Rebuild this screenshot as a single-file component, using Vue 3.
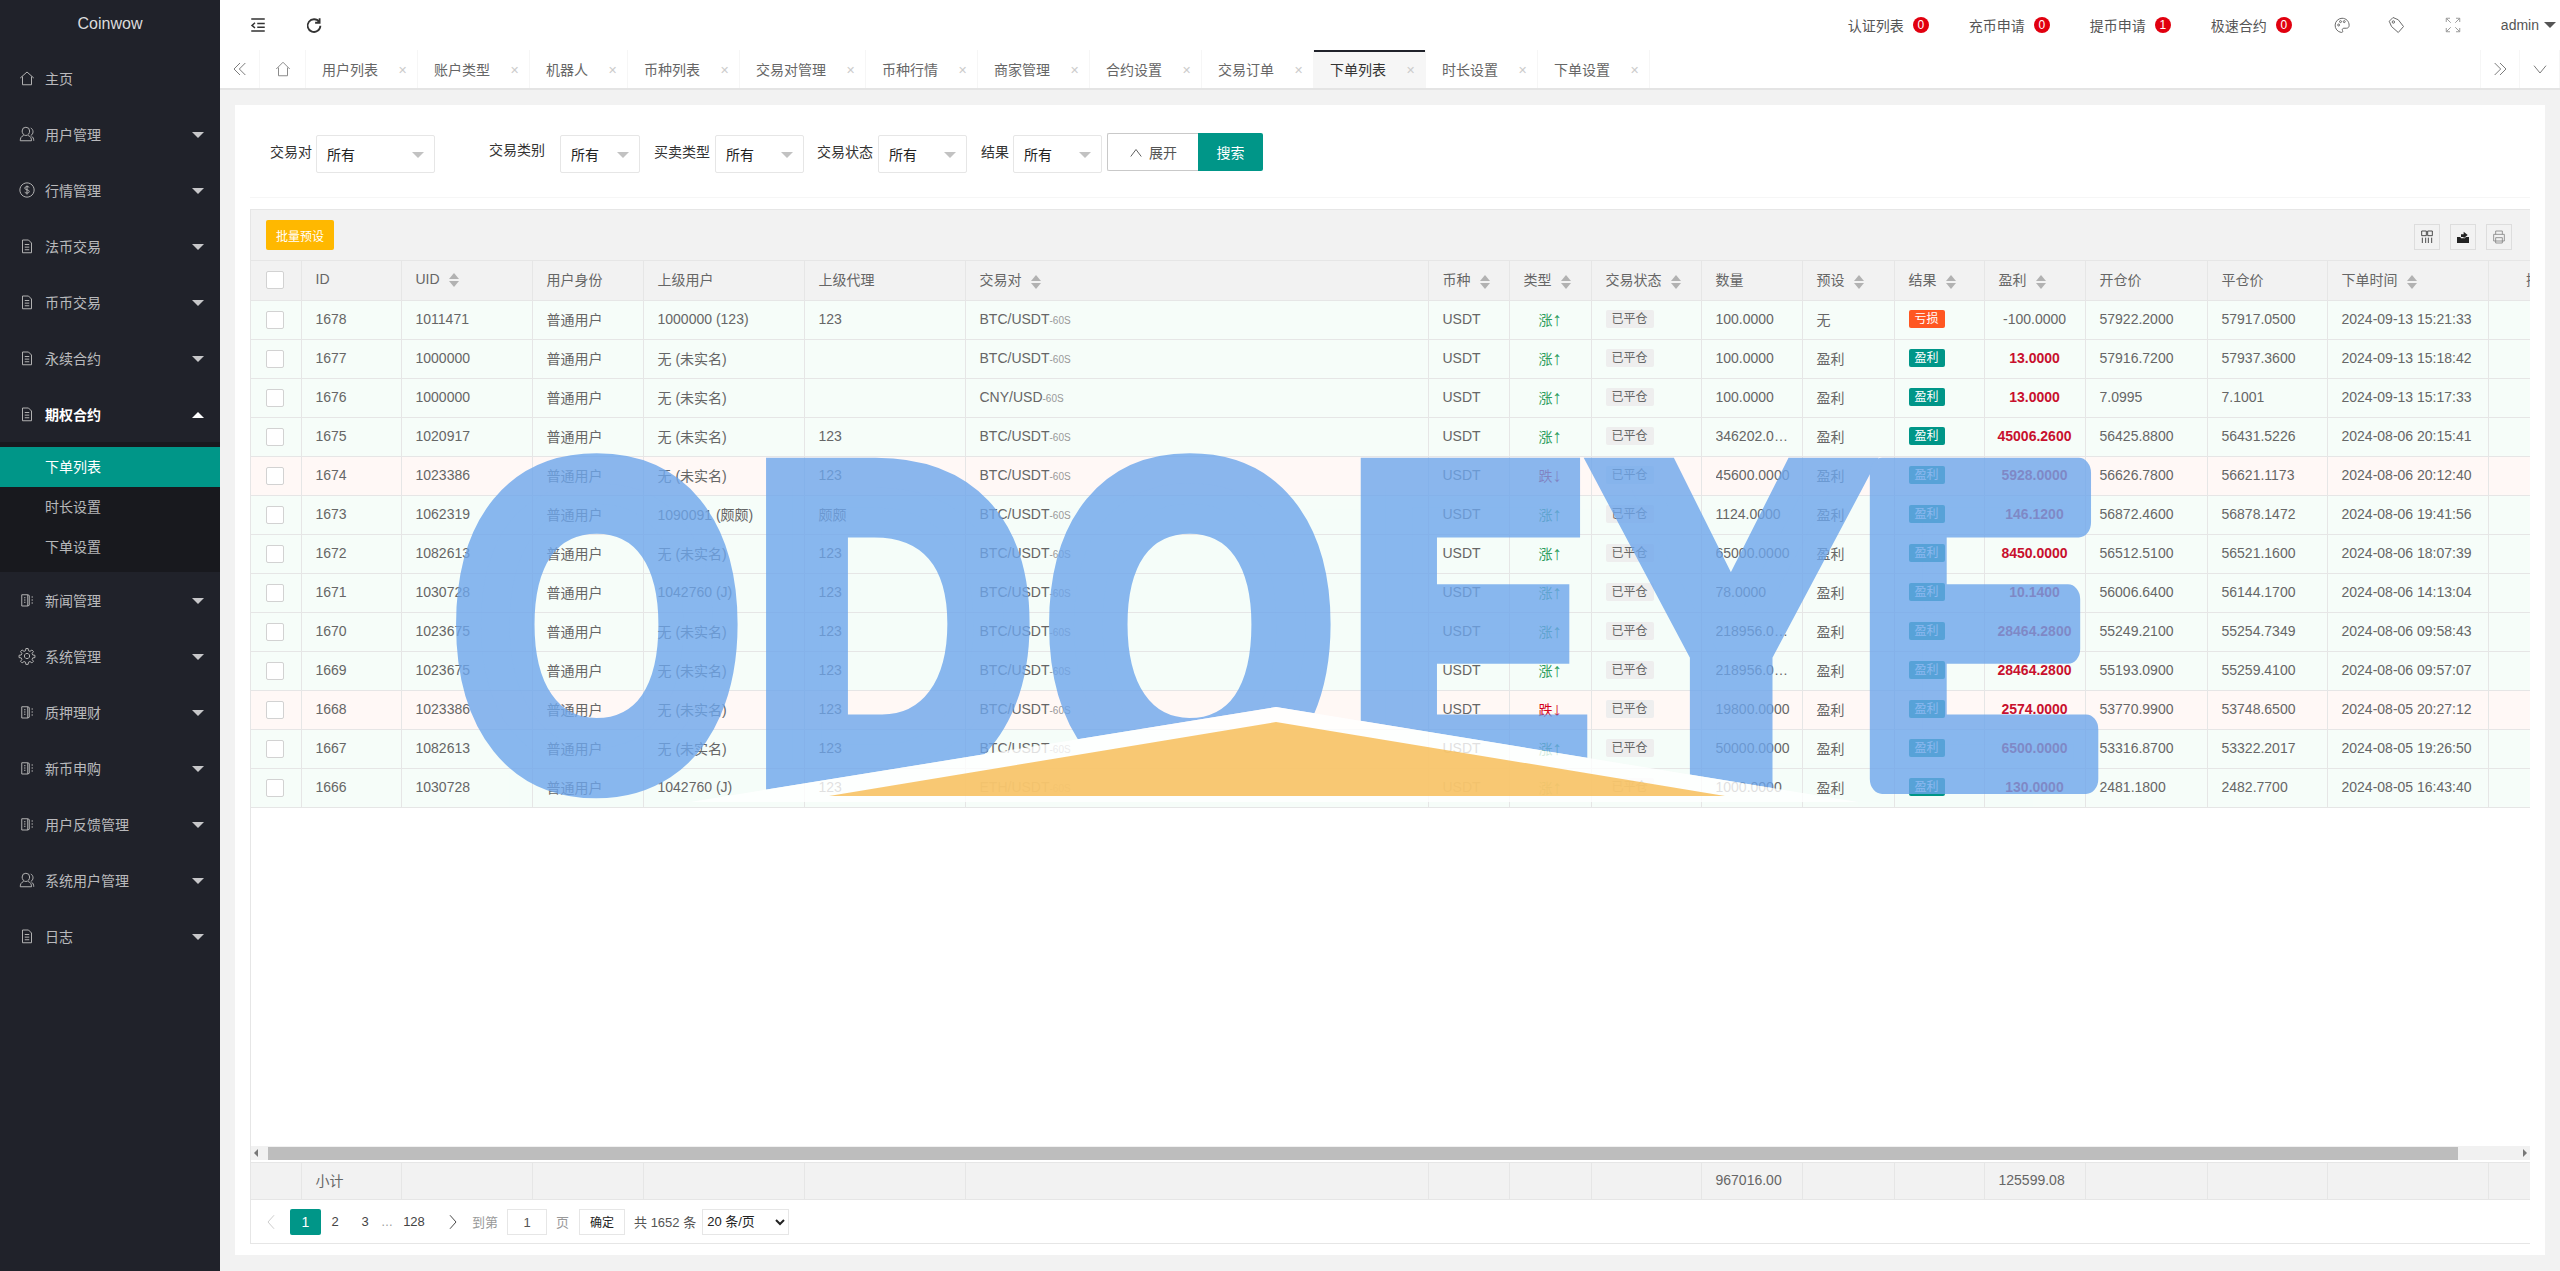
<template>
  <div class="app">
    <aside class="side">
      <div class="logo">Coinwow</div>
      <template v-for="m in menus" :key="m.name">
        <div class="menu" :class="{ open: m.subs }">
          <svg class="m-icon" viewBox="0 0 24 24"><path :d="icons[m.icon]" /></svg>
          <span class="m-name">{{ m.name }}</span>
          <i v-if="m.icon !== 'home'" class="m-arrow"></i>
        </div>
        <div v-if="m.subs" class="subs">
          <div v-for="(s, i) in m.subs" :key="s" class="sub" :class="{ on: i === 0 }">{{ s }}</div>
        </div>
      </template>
    </aside>

    <div class="main">
      <header class="top">
        <svg class="t-btn" viewBox="0 0 24 24"><path d="M3 4h18M11 10h10M11 15h10M3 20h18M8 9l-4 3.500 4 3.500" /></svg>
        <svg class="t-btn refresh" viewBox="0 0 24 24"><path d="M19 8a8.500 8.500 0 1 0 1.500 5M19.500 3v6h-6" /></svg>
        <div class="t-right">
          <div v-for="n in notices" :key="n.name" class="notice">
            <span>{{ n.name }}</span><b class="badge">{{ n.count }}</b>
          </div>
          <svg class="t-icon palette" viewBox="0 0 24 24"><path d="M12 3a9.500 9.500 0 0 0-1 18.900c2 .2 2.500-1.400 1.700-2.600-.9-1.400 0-3 1.800-3H18c2 0 3.500-1.500 3.500-3.800C21.500 7 17.500 3 12 3z" /><circle cx="7.500" cy="12" r="1.300" /><circle cx="10" cy="7.500" r="1.300" /><circle cx="15" cy="7.500" r="1.300" /></svg>
          <svg class="t-icon t-tag" viewBox="0 0 24 24"><path d="M3 7l5-5 7 3 7 9-7 8-9-8z" /><circle cx="8.500" cy="8" r="1.600" /></svg>
          <svg class="t-icon full" viewBox="0 0 24 24"><path d="M3 3l6 6M21 3l-6 6M3 21l6-6M21 21l-6-6M3 8V3h5M16 3h5v5M3 16v5h5M21 16v5h-5" /></svg>
          <span class="admin">admin</span><i class="admin-caret"></i>
        </div>
      </header>

      <nav class="tabs">
        <div class="tab-nav"><svg viewBox="0 0 24 24"><path d="M12 3L3 12l9 9M20 3l-9 9 9 9" /></svg></div>
        <div class="tab-home"><svg viewBox="0 0 24 24"><path d="M3 12l9-9 9 9M6 10v11h12V10" /></svg></div>
        <div v-for="t in tabs" :key="t" class="tab" :class="{ active: t === '下单列表' }">
          {{ t }}<span class="x">✕</span>
        </div>
        <div class="tab-fill"></div>
        <div class="tab-nav"><svg viewBox="0 0 24 24"><path d="M4 3l9 9-9 9M12 3l9 9-9 9" /></svg></div>
        <div class="tab-nav"><svg viewBox="0 0 24 24"><path d="M3 7l9 11 9-11" /></svg></div>
      </nav>

      <main class="content">
        <section class="card">
          <div class="filters">
            <div v-for="f in filters" :key="f" class="f-item">
              <label>{{ f }}</label>
              <div class="sel">所有<i></i></div>
            </div>
            <div class="btns">
              <button class="b-open"><svg viewBox="0 0 24 24"><path d="M3 18L12 6l9 12" /></svg>展开</button>
              <button class="b-search">搜索</button>
            </div>
          </div>

          <div class="grid">
            <div class="toolbar">
              <button class="b-batch">批量预设</button>
              <div class="tools">
                <div class="tool"><svg viewBox="0 0 24 24"><path d="M4 3h7v7H4zM13 3h7v7h-7zM5 13v8M10 13v8M14 13v8M19 13v8" /></svg></div>
                <div class="tool"><svg viewBox="0 0 24 24"><path class="solid" d="M3 12h5l1 2h6l1-2h5v9H3zM9 12V8h4V4l6 5-6 5v-2z" /></svg></div>
                <div class="tool dim"><svg viewBox="0 0 24 24"><path d="M7 8V3h10v5M4 8h16v10H4zM7 13h10v8H7z" /></svg></div>
              </div>
            </div>

            <div class="t-wrap">
              <table>
                <colgroup><col v-for="w in widths" :key="w.k" :style="{ width: w.w + 'px' }" /></colgroup>
                <thead>
                  <tr>
                    <th class="c-check"><i class="check"></i></th>
                    <th v-for="c in cols" :key="c.t" :class="{ last: c.t === '操作' }">
                      {{ c.t }}<span v-if="c.s" class="sort"><i></i><i></i></span>
                    </th>
                  </tr>
                </thead>
                <tbody>
                  <tr v-for="r in rows" :key="r.id" :class="r.dir === '跌' ? 'down' : 'up'">
                    <td class="c-check"><i class="check"></i></td>
                    <td>{{ r.id }}</td>
                    <td>{{ r.uid }}</td>
                    <td>普通用户</td>
                    <td>{{ r.parent }}</td>
                    <td>{{ r.agent }}</td>
                    <td>{{ r.pair }}<small>-60S</small></td>
                    <td>USDT</td>
                    <td class="dir">{{ r.dir }}<span class="dir-arrow">{{ r.dir === '跌' ? '↓' : '↑' }}</span></td>
                    <td><span class="tag-grey">已平仓</span></td>
                    <td><div class="clip">{{ r.qty }}</div></td>
                    <td>{{ r.preset }}</td>
                    <td><span class="tag" :class="{ loss: r.preset === '无' }">{{ r.preset === '无' ? '亏损' : '盈利' }}</span></td>
                    <td class="profit" :class="{ neg: r.preset === '无' }">{{ r.profit }}</td>
                    <td>{{ r.open }}</td>
                    <td>{{ r.close }}</td>
                    <td>{{ r.time }}</td>
                    <td></td>
                  </tr>
                </tbody>
              </table>
            </div>

            <div class="hbar"><i class="arr l"></i><div class="thumb"></div><i class="arr r"></i></div>

            <div class="total">
              <table>
                <colgroup><col v-for="w in widths" :key="w.k" :style="{ width: w.w + 'px' }" /></colgroup>
                <tbody>
                  <tr>
                    <td v-for="(c, i) in totalCells" :key="i">{{ c }}</td>
                  </tr>
                </tbody>
              </table>
            </div>

            <div class="pager">
              <svg class="p-arrow dim" viewBox="0 0 12 24"><path d="M10 3L2 12l8 9" /></svg>
              <span class="p-on">1</span>
              <span class="p-num n2">2</span>
              <span class="p-num n3">3</span>
              <span class="p-dots">…</span>
              <span class="p-num n4">128</span>
              <svg class="p-arrow" viewBox="0 0 12 24"><path d="M2 3l8 9-8 9" /></svg>
              <span class="p-text goto">到第</span>
              <div class="p-input">1</div>
              <span class="p-text">页</span>
              <button class="p-ok">确定</button>
              <span class="p-count">共 1652 条</span>
              <select class="p-size"><option>20 条/页</option></select>
            </div>
          </div>
        </section>
      </main>
    </div>

    <svg class="mark" viewBox="0 0 2560 1271">
      <defs>
        <clipPath id="cut">
          <path d="M0 0H2560V1271H0ZM1276 707L690 802V1271H1858V802Z" clip-rule="evenodd" />
        </clipPath>
      </defs>
      <g opacity="0.8" clip-path="url(#cut)" class="letters">
        <text v-for="l in letters" :key="l.x" :class="{ soft: l.soft }" :transform="`translate(${l.x} 779) scale(${l.s} 1)`">{{ l.c }}</text>
      </g>
      <polygon points="1276,707 690,802 1858,802" fill="#fff" opacity="0.8" />
      <polygon points="1276,722 829,796 1725,796" fill="#f6ba50" opacity="0.8" />
    </svg>
  </div>
</template>

<script setup>
const icons = {
  home: "M3 12l9-8 9 8M6 10v11h12V10",
  user: "M10.500 3a5 5 0 0 1 5 5c0 3-2 6-5 6s-5-3-5-6a5 5 0 0 1 5-5zM7.500 14C4 15 3 18 3 21h15c0-3-1-6-4.500-7M17 4c2 1 3 3 3 5s-1 4-3 5M18 15c2 1 3 3 3 6",
  dollar: "M12 2.500a9.500 9.500 0 1 0 .01 0zM15 8.500c-1-1.500-6-1.800-6 1 0 3 6 1.500 6 4.500 0 2.800-5 2.500-6 1M12 6v12",
  file: "M6 4h8l4 4v13H6zM9 10h6M9 13.500h6M9 17h6",
  book: "M5 5h8v15H5zM13 5l2 1v13l-2 1M8 9h2M8 12h2M8 15h2M18 8h2M18 12h2M18 16h2",
  gear: "M10.500 2h3l.5 3 2 .8 2.500-1.800 2.100 2.100-1.800 2.500.8 2 3 .5v3l-3 .5-.8 2 1.800 2.500-2.100 2.100-2.500-1.800-2 .8-.5 3h-3l-.5-3-2-.8-2.500 1.800-2.100-2.100 1.800-2.500-.8-2-3-.5v-3l3-.5.8-2-1.800-2.500 2.100-2.100 2.500 1.800 2-.8zM12 8.500a3.500 3.500 0 1 0 .01 0z",
};

const menus = [
  { name: "主页", icon: "home" },
  { name: "用户管理", icon: "user" },
  { name: "行情管理", icon: "dollar" },
  { name: "法币交易", icon: "file" },
  { name: "币币交易", icon: "file" },
  { name: "永续合约", icon: "file" },
  { name: "期权合约", icon: "file", subs: ["下单列表", "时长设置", "下单设置"] },
  { name: "新闻管理", icon: "book" },
  { name: "系统管理", icon: "gear" },
  { name: "质押理财", icon: "book" },
  { name: "新币申购", icon: "book" },
  { name: "用户反馈管理", icon: "book" },
  { name: "系统用户管理", icon: "user" },
  { name: "日志", icon: "file" },
];

const notices = [
  { name: "认证列表", count: 0 },
  { name: "充币申请", count: 0 },
  { name: "提币申请", count: 1 },
  { name: "极速合约", count: 0 },
];

const tabs = ["用户列表", "账户类型", "机器人", "币种列表", "交易对管理", "币种行情", "商家管理", "合约设置", "交易订单", "下单列表", "时长设置", "下单设置"];
const filters = ["交易对", "交易类别", "买卖类型", "交易状态", "结果"];

const cols = [
  { t: "ID", w: 100 },
  { t: "UID", w: 131, s: 1 },
  { t: "用户身份", w: 111 },
  { t: "上级用户", w: 161 },
  { t: "上级代理", w: 161 },
  { t: "交易对", w: 463, s: 1 },
  { t: "币种", w: 81, s: 1 },
  { t: "类型", w: 82, s: 1 },
  { t: "交易状态", w: 110, s: 1 },
  { t: "数量", w: 101 },
  { t: "预设", w: 92, s: 1 },
  { t: "结果", w: 90, s: 1 },
  { t: "盈利", w: 101, s: 1 },
  { t: "开仓价", w: 122 },
  { t: "平仓价", w: 120 },
  { t: "下单时间", w: 161, s: 1 },
  { t: "操作", w: 104 },
];
const widths = [{ k: "check", w: 50 }, ...cols.map((c) => ({ k: c.t, w: c.w }))];

const totalCells = widths.map((w) => {
  if (w.k === "ID") return "小计";
  if (w.k === "数量") return "967016.00";
  if (w.k === "盈利") return "125599.08";
  return "";
});

const NONE = "无 (未实名)";
const row = (id, uid, parent, agent, pair, dir, qty, preset, profit, open, close, time) => ({ id, uid, parent, agent, pair, dir, qty, preset, profit, open, close, time });
const rows = [
  row(1678, 1011471, "1000000 (123)", "123", "BTC/USDT", "涨", "100.0000", "无", "-100.0000", "57922.2000", "57917.0500", "2024-09-13 15:21:33"),
  row(1677, 1000000, NONE, "", "BTC/USDT", "涨", "100.0000", "盈利", "13.0000", "57916.7200", "57937.3600", "2024-09-13 15:18:42"),
  row(1676, 1000000, NONE, "", "CNY/USD", "涨", "100.0000", "盈利", "13.0000", "7.0995", "7.1001", "2024-09-13 15:17:33"),
  row(1675, 1020917, NONE, "123", "BTC/USDT", "涨", "346202.0000", "盈利", "45006.2600", "56425.8800", "56431.5226", "2024-08-06 20:15:41"),
  row(1674, 1023386, NONE, "123", "BTC/USDT", "跌", "45600.0000", "盈利", "5928.0000", "56626.7800", "56621.1173", "2024-08-06 20:12:40"),
  row(1673, 1062319, "1090091 (颇颇)", "颇颇", "BTC/USDT", "涨", "1124.0000", "盈利", "146.1200", "56872.4600", "56878.1472", "2024-08-06 19:41:56"),
  row(1672, 1082613, NONE, "123", "BTC/USDT", "涨", "65000.0000", "盈利", "8450.0000", "56512.5100", "56521.1600", "2024-08-06 18:07:39"),
  row(1671, 1030728, "1042760 (J)", "123", "BTC/USDT", "涨", "78.0000", "盈利", "10.1400", "56006.6400", "56144.1700", "2024-08-06 14:13:04"),
  row(1670, 1023675, NONE, "123", "BTC/USDT", "涨", "218956.0000", "盈利", "28464.2800", "55249.2100", "55254.7349", "2024-08-06 09:58:43"),
  row(1669, 1023675, NONE, "123", "BTC/USDT", "涨", "218956.0000", "盈利", "28464.2800", "55193.0900", "55259.4100", "2024-08-06 09:57:07"),
  row(1668, 1023386, NONE, "123", "BTC/USDT", "跌", "19800.0000", "盈利", "2574.0000", "53770.9900", "53748.6500", "2024-08-05 20:27:12"),
  row(1667, 1082613, NONE, "123", "BTC/USDT", "涨", "50000.0000", "盈利", "6500.0000", "53316.8700", "53322.2017", "2024-08-05 19:26:50"),
  row(1666, 1030728, "1042760 (J)", "123", "ETH/USDT", "涨", "1000.0000", "盈利", "130.0000", "2481.1800", "2482.7700", "2024-08-05 16:43:40"),
];

// watermark letters: centre x and horizontal squeeze
const letters = [
  { c: "O", x: 597, s: 0.83 },
  { c: "D", x: 893, s: 0.87 },
  { c: "O", x: 1190, s: 0.83 },
  { c: "E", x: 1469, s: 0.81 },
  { c: "Y", x: 1731, s: 0.88 },
  { c: "E", x: 1979, s: 0.817, soft: true },
];
</script>

<style>
html,
body {
  margin: 0;
  overflow: hidden;
}
</style>

<style scoped>
.app {
  position: relative;
  display: flex;
  height: 1271px;
  width: 2560px;
  overflow: hidden;
  font-family: "Liberation Sans", "Noto Sans CJK SC", sans-serif;
  font-size: 14px;
  color: #666;
  background: #f2f2f2;
}
svg {
  fill: none;
  stroke: currentColor;
  stroke-width: 1.5;
}

/* sidebar */
.side {
  width: 220px;
  flex: none;
  background: #20222a;
  color: rgba(255, 255, 255, 0.7);
}
.logo {
  height: 50px;
  line-height: 48px;
  text-align: center;
  color: rgba(255, 255, 255, 0.85);
  font-size: 16px;
}
.menu {
  position: relative;
  display: flex;
  align-items: center;
  height: 56px;
  padding-left: 18px;
}
.menu.open {
  color: #fff;
  font-weight: bold;
}
.m-icon {
  width: 18px;
  height: 18px;
  margin-right: 9px;
  flex: none;
  stroke-width: 1.3;
  color: #b5b5b5;
}
.m-arrow {
  position: absolute;
  right: 16px;
  top: 26px;
  border: 6px solid transparent;
  border-top-color: rgba(255, 255, 255, 0.75);
  border-bottom: 0;
}
.open .m-arrow {
  border-top: 0;
  border-bottom: 6px solid #fff;
}
.subs {
  background: #18191e;
  padding: 5px 0;
}
.sub {
  height: 40px;
  line-height: 40px;
  padding-left: 45px;
}
.sub.on {
  background: #009688;
  color: #fff;
}

/* header */
.main {
  flex: 1;
  min-width: 0;
  display: flex;
  flex-direction: column;
}
.top {
  height: 50px;
  flex: none;
  display: flex;
  align-items: center;
  background: #fff;
  color: #333;
  padding-left: 29px;
}
.t-btn {
  width: 18px;
  height: 18px;
  margin-right: 38px;
  stroke-width: 2;
}
.refresh {
  stroke-width: 2.400;
}
.t-right {
  margin-left: auto;
  display: flex;
  align-items: center;
  position: relative;
}
.notice {
  display: flex;
  align-items: center;
  margin-right: 40px;
  color: #555;
}
.notice:nth-child(4) {
  margin-right: 41px;
}
.badge {
  width: 16px;
  height: 16px;
  line-height: 16px;
  margin-left: 9px;
  border-radius: 50%;
  background: #e1000f;
  color: #fff;
  font-size: 12px;
  font-weight: normal;
  text-align: center;
}
.t-icon {
  width: 18px;
  height: 18px;
  color: #666;
  stroke-width: 1.300;
}
.palette {
  margin-right: 36px;
}
.t-tag {
  margin-right: 39px;
}
.full {
  margin-right: 39px;
  color: #999;
}
.admin {
  color: #555;
}
.admin-caret {
  margin: 0 4px 0 5px;
  border: 6px solid transparent;
  border-top-color: #555;
  border-bottom: 0;
}

/* tabs */
.tabs {
  flex: none;
  display: flex;
  background: #fff;
  border-bottom: 2px solid #e4e4e4;
  height: 38px;
}
.tab-nav,
.tab-home {
  display: flex;
  align-items: center;
  justify-content: center;
  width: 40px;
  border-right: 1px solid #f6f6f6;
  box-sizing: border-box;
  color: #666;
}
.tab-home {
  width: 46px;
  color: #888;
}
.tab-nav svg,
.tab-home svg {
  width: 16px;
  height: 16px;
  stroke-width: 1.300;
}
.tab-home svg {
  width: 18px;
  height: 18px;
}
.tab-nav:nth-last-child(2) {
  border-left: 1px solid #f6f6f6;
}
.tab-fill {
  flex: 1;
}
.tab {
  position: relative;
  line-height: 40px;
  padding: 0 39px 0 16px;
  border-right: 1px solid #f6f6f6;
  white-space: nowrap;
  color: #666;
}
.tab.active {
  background: #f6f6f6;
  color: #333;
  box-shadow: inset 0 2px 0 #20222a;
}
.x {
  position: absolute;
  right: 10px;
  top: 0;
  font-size: 11px;
  color: #ccc;
}

/* content */
.content {
  flex: 1;
  min-height: 0;
  display: flex;
  padding: 15px 15px 16px;
}
.card {
  flex: 1;
  min-width: 0;
  display: flex;
  flex-direction: column;
  background: #fff;
  padding: 0 15px 11px;
}
.filters {
  display: flex;
  height: 93px;
  flex: none;
  padding-top: 28px;
  box-sizing: border-box;
  margin-bottom: 11px;
  border-bottom: 1px solid #f6f6f6;
}
.f-item {
  display: flex;
  height: 38px;
  margin-top: 2px;
}
.f-item label {
  margin-right: 4px;
  line-height: 34px;
  color: #333;
}
.f-item:nth-child(1) {
  margin-left: 20px;
}
.f-item:nth-child(2) {
  margin-left: 54px;
}
.f-item:nth-child(2) label {
  margin-right: 15px;
  line-height: 30px;
}
.f-item:nth-child(3),
.f-item:nth-child(5) {
  margin-left: 14px;
}
.f-item:nth-child(4) {
  margin-left: 13px;
}
.f-item:nth-child(3) label,
.f-item:nth-child(4) label {
  margin-right: 5px;
}
.sel {
  position: relative;
  width: 89px;
  height: 38px;
  box-sizing: border-box;
  border: 1px solid #e6e6e6;
  border-radius: 2px;
  line-height: 38px;
  padding-left: 10px;
  color: #222;
  font-size: 14px;
}
.f-item:nth-child(1) .sel {
  width: 119px;
}
.f-item:nth-child(2) .sel {
  width: 80px;
}
.sel i {
  position: absolute;
  right: 10px;
  top: 16px;
  border: 6px solid transparent;
  border-top-color: #c2c2c2;
  border-bottom: 0;
}
.btns {
  display: flex;
  margin-left: 5px;
}
button {
  font-family: inherit;
  cursor: pointer;
}
.b-open {
  display: flex;
  align-items: center;
  justify-content: center;
  gap: 6px;
  width: 91px;
  height: 38px;
  background: #fff;
  border: 1px solid #c9c9c9;
  border-right: 0;
  border-radius: 2px 0 0 2px;
  color: #555;
  font-size: 14px;
}
.b-open svg {
  width: 14px;
  height: 14px;
  stroke-width: 1.600;
  margin-top: 2px;
}
.b-search {
  width: 65px;
  height: 38px;
  background: #009688;
  border: 0;
  border-radius: 0 2px 2px 0;
  color: #fff;
  font-size: 14px;
}

/* table */
.grid {
  flex: 1;
  min-height: 0;
  display: flex;
  flex-direction: column;
  border: 1px solid #e6e6e6;
  border-right: 0;
}
.toolbar {
  height: 50px;
  flex: none;
  display: flex;
  align-items: center;
  padding: 0 18px 0 15px;
  background: #f2f2f2;
  border-bottom: 1px solid #e6e6e6;
}
.b-batch {
  width: 68px;
  height: 30px;
  background: #ffb800;
  border: 0;
  border-radius: 2px;
  color: #fff;
  font-size: 12px;
}
.tools {
  margin-left: auto;
  display: flex;
  gap: 10px;
  margin-top: 4px;
}
.tool {
  width: 26px;
  height: 26px;
  display: flex;
  align-items: center;
  justify-content: center;
  border: 1px solid #ddd;
  box-sizing: border-box;
  color: #333;
}
.tool.dim {
  color: #888;
}
.tool svg {
  width: 16px;
  height: 16px;
  stroke-width: 1.300;
}
.tool .solid {
  fill: #222;
  stroke: none;
}
.t-wrap {
  flex: 1;
  min-height: 0;
  overflow: hidden;
}
table {
  table-layout: fixed;
  border-collapse: collapse;
  width: 2340px;
}
th,
td {
  height: 39px;
  padding: 0 14px 2px;
  box-sizing: border-box;
  border: 1px solid #e6e6e6;
  border-top: 0;
  border-left: 0;
  font-weight: normal;
  text-align: left;
  white-space: nowrap;
  overflow: hidden;
  color: #666;
}
th {
  background: #f2f2f2;
}
th.last {
  text-align: center;
}
tr.up td {
  background: #f6fdf9;
}
tr.down td {
  background: #fff8f6;
}
.c-check {
  padding: 0 0 0 15px;
}
.check {
  display: block;
  width: 18px;
  height: 18px;
  box-sizing: border-box;
  background: #fff;
  border: 1px solid #d2d2d2;
  border-radius: 2px;
}
.sort {
  display: inline-block;
  vertical-align: middle;
  margin-left: 9px;
  width: 10px;
}
.sort i {
  display: block;
  border: 5px solid transparent;
  border-top: 0;
  border-bottom: 6px solid #b2b2b2;
  margin-bottom: 2px;
}
.sort i + i {
  border-bottom: 0;
  border-top: 6px solid #b2b2b2;
  margin-bottom: 0;
}
small {
  font-size: 10px;
  color: #999;
}
td.dir {
  color: #2f9e5f;
  padding-left: 29px;
}
.down td.dir {
  color: #d4001a;
}
.dir-arrow {
  font-size: 19px;
  line-height: 14px;
  font-weight: normal;
  vertical-align: -1px;
}
.tag-grey {
  display: inline-block;
  height: 18px;
  line-height: 18px;
  padding: 0 6px;
  background: #eee;
  border-radius: 2px;
  font-size: 12px;
  color: #666;
}
.tag {
  display: inline-block;
  height: 18px;
  line-height: 18px;
  padding: 0 6px;
  background: #009688;
  border-radius: 2px;
  color: #fff;
  font-size: 12px;
}
.tag.loss {
  background: #ff5722;
}
.clip {
  width: 74px;
  overflow: hidden;
  text-overflow: ellipsis;
}
td.profit {
  padding: 0 0 2px;
  text-align: center;
  font-weight: bold;
  color: #c8102e;
}
td.profit.neg {
  font-weight: normal;
  color: #666;
}

/* scrollbar */
.hbar {
  flex: none;
  display: flex;
  align-items: center;
  height: 14px;
  margin-bottom: 2px;
  background: #f1f1f1;
}
.thumb {
  margin-left: 10px;
  width: 2190px;
  height: 13px;
  background: #bdbdbd;
}
.arr {
  border: 4px solid transparent;
}
.arr.l {
  margin-left: 3px;
  border-left: 0;
  border-right: 4px solid #777;
}
.arr.r {
  margin-left: auto;
  margin-right: 3px;
  border-right: 0;
  border-left: 4px solid #777;
}
.total {
  flex: none;
  overflow: hidden;
}
.total td {
  height: 37px;
  background: #f2f2f2;
  border-top: 1px solid #e6e6e6;
}

/* pager */
.pager {
  flex: none;
  height: 43px;
  display: flex;
  align-items: center;
  padding-left: 14px;
  box-sizing: border-box;
  font-size: 12px;
  color: #555;
}
.p-arrow {
  width: 12px;
  height: 18px;
  color: #444;
  stroke-width: 1.300;
  margin: 0 13px 0 14px;
}
.p-arrow.dim {
  color: #ccc;
  margin: 0 13px 0 0;
}
.p-on {
  width: 31px;
  height: 26px;
  line-height: 26px;
  text-align: center;
  background: #009688;
  color: #fff;
  border-radius: 2px;
  font-size: 14px;
}
.p-num {
  text-align: center;
  font-size: 13px;
  color: #444;
}
.n2 {
  width: 28px;
}
.n3 {
  width: 32px;
}
.p-dots {
  width: 14px;
  color: #999;
}
.n4 {
  width: 38px;
}
.p-text {
  color: #999;
  font-size: 13px;
}
.goto {
  margin-right: 9px;
}
.p-input {
  width: 40px;
  height: 26px;
  line-height: 26px;
  border: 1px solid #e6e6e6;
  box-sizing: border-box;
  text-align: center;
  margin-right: 9px;
  font-size: 13px;
  color: #555;
}
.p-ok {
  width: 46px;
  height: 26px;
  margin-left: 10px;
  background: #fff;
  border: 1px solid #e6e6e6;
  font-size: 12px;
  color: #222;
  padding: 0;
}
.p-count {
  margin: 0 6px 0 9px;
  font-size: 13px;
}
.p-size {
  width: 87px;
  height: 26px;
  background: #fff;
  border: 1px solid #e6e6e6;
  font-family: inherit;
  font-size: 13px;
  color: #222;
}

/* watermark laid over the whole page */
.mark {
  position: absolute;
  left: 0;
  top: 0;
  width: 2560px;
  height: 1271px;
  pointer-events: none;
  stroke: none;
}
.letters {
  fill: #6da6ec;
  stroke: #6da6ec;
  stroke-width: 30;
  stroke-linejoin: miter;
  font-family: "Liberation Sans", sans-serif;
  font-weight: bold;
  font-size: 445px;
  text-anchor: middle;
}
.letters .soft {
  stroke-linejoin: round;
}
</style>
